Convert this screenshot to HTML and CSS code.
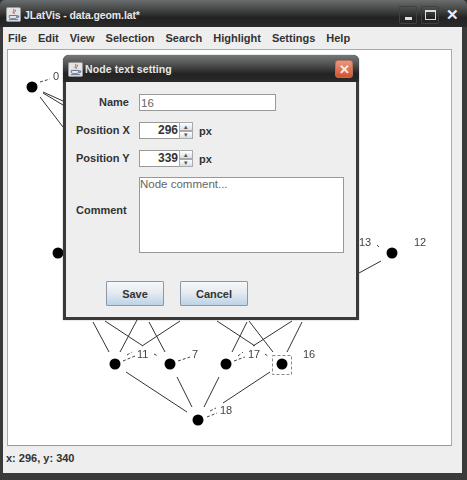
FILE: index.html
```html
<!DOCTYPE html>
<html>
<head>
	<meta name="viewport" content="width=device-width, initial-scale=1">
	<title>JLatVis - data.geom.lat*</title>
	<link rel="stylesheet" href="styles.css">
</head>
<body>
	<div class="window">
		<div class="titlebar">
			<svg class="app-icon" viewBox="0 0 16 16">
				<rect x="0.5" y="0.5" width="15" height="15" rx="1.5" fill="#e4e4e4" stroke="#9a9a9a"/>
				<path d="M8 2c2 2-2 3 0 5M10 3c1 2-2 2-1 4" fill="none" stroke="#c0504d"/>
				<path d="M3.5 9h8v2c0 2-8 2-8 0zM11.500 9.500h2v1.500h-2M3 13.500h10" fill="none" stroke="#5a6f8c"/>
			</svg>
			<span class="title-text">JLatVis - data.geom.lat*</span>
			<div class="window-buttons">
				<span class="win-btn"><span class="win-min"></span></span>
				<span class="win-btn"><span class="win-max"></span></span>
				<span class="win-btn win-x">✕</span>
			</div>
		</div>

		<div class="main">
			<div class="menubar">
				<span>File</span>
				<span>Edit</span>
				<span>View</span>
				<span>Selection</span>
				<span>Search</span>
				<span>Highlight</span>
				<span>Settings</span>
				<span>Help</span>
			</div>

			<div class="canvas">
				<svg class="graph" width="445" height="396" viewBox="7 49 445 396">
					<g class="edges">
						<path d="M43 92L63 101M43 93L63 105M40 97L63 127"/>
						<path d="M93 322L109 352M105 321L143 346M137 320L120 352M149 322L165 352M180 321L142 346"/>
						<path d="M217 321L255 346M247 322L232 352M249 321L273 352M292 321L253 346M302 322L287 352"/>
						<path d="M126 372L187 412M177 377L192 407M219 377L204 407M270 372L223 403M359 273L381 261"/>
					</g>
					<g class="dashes">
						<path d="M40 82L50 79M123 361L135 356M127 355L132 352M154 354L158 356M178 361L190 357"/>
						<path d="M234 361L245 357M238 356L243 352M265 354L269 357M207 417L217 413M210 411L216 408M377 245L379 247"/>
					</g>
					<rect class="selected" x="272.500" y="355.500" width="19" height="19"/>
					<g class="nodes">
						<circle cx="32" cy="87" r="5.500"/>
						<circle cx="58" cy="253" r="5.500"/>
						<circle cx="392" cy="253" r="5.500"/>
						<circle cx="115" cy="364" r="5.500"/>
						<circle cx="170" cy="364" r="5.500"/>
						<circle cx="226" cy="364" r="5.500"/>
						<circle cx="282" cy="364" r="5.500"/>
						<circle cx="198" cy="420" r="5.500"/>
					</g>
					<g class="labels">
						<text x="53" y="80">0</text>
						<text x="359" y="246">13</text>
						<text x="414" y="246">12</text>
						<text x="137" y="358">11</text>
						<text x="192" y="358">7</text>
						<text x="248" y="358">17</text>
						<text x="303" y="358">16</text>
						<text x="220" y="414">18</text>
					</g>
				</svg>
			</div>

			<div class="statusbar">x: 296, y: 340</div>
		</div>

		<div class="dialog">
			<div class="dialog-title">
				<svg class="app-icon" viewBox="0 0 16 16">
					<rect x="0.5" y="0.5" width="15" height="15" rx="1.5" fill="#e4e4e4" stroke="#9a9a9a"/>
					<path d="M8 2c2 2-2 3 0 5M10 3c1 2-2 2-1 4" fill="none" stroke="#c0504d"/>
					<path d="M3.500 9h8v2c0 2-8 2-8 0zM11.500 9.500h2v1.500h-2M3 13.500h10" fill="none" stroke="#5a6f8c"/>
				</svg>
				<span class="dialog-title-text">Node text setting</span>
				<span class="dialog-close">✕</span>
			</div>
			<div class="dialog-body">
				<div class="form">
					<label class="label-name">Name</label>
					<input class="field field-name" type="text" value="16">

					<label>Position X</label>
					<div class="spin-row">
						<div class="spinner">
							<span class="spin-value">296</span>
							<span class="spin-arrows"><span>▴</span><span>▾</span></span>
						</div>
						<span class="unit">px</span>
					</div>

					<label>Position Y</label>
					<div class="spin-row">
						<div class="spinner">
							<span class="spin-value">339</span>
							<span class="spin-arrows"><span>▴</span><span>▾</span></span>
						</div>
						<span class="unit">px</span>
					</div>

					<label class="label-comment">Comment</label>
					<textarea class="field field-comment">Node comment...</textarea>
				</div>
				<div class="buttons">
					<button class="button button-save">Save</button>
					<button class="button button-cancel">Cancel</button>
				</div>
			</div>
		</div>
	</div>
</body>
</html>
```

FILE: styles.css
```css
* {
	box-sizing: border-box;
}

html, body {
	margin: 0;
	padding: 0;
	background-color: #333;
}

body {
	font-family: "Liberation Sans", Arial, sans-serif;
	color: #333;
}

.window {
	position: relative;
	display: flex;
	flex-direction: column;
	width: 467px;
	height: 480px;
	overflow: hidden;
	border-radius: 5px 5px 0 0;
	background-color: #3a3a3a;
}

.titlebar {
	display: flex;
	align-items: center;
	flex: none;
	height: 27px;
	padding: 2px 6px 0 6px;
	background: linear-gradient(#6a6d6d 0, #4b4d4d 30%, #232323 65%, #2a2a2a 100%);
}

.app-icon {
	flex: none;
	width: 15px;
	height: 15px;
}

.title-text {
	margin-left: 3px;
	color: #e8e8e8;
	font-size: 10.5px;
	font-weight: bold;
	letter-spacing: -0.1px;
}

.window-buttons {
	display: flex;
	gap: 4px;
	margin-left: auto;
}

.win-btn {
	display: flex;
	align-items: center;
	justify-content: center;
	width: 18px;
	height: 18px;
	border-radius: 2px;
	box-shadow: inset 0 0 0 1px #3f4141;
	color: #eee;
	font-size: 15px;
	font-weight: bold;
}

.win-x {
	box-shadow: none;
}

.win-min {
	width: 7px;
	height: 3px;
	margin-top: 8px;
	background-color: #ddd;
}

.win-max {
	width: 11px;
	height: 10px;
	border: 1px solid #ddd;
	border-top-width: 2px;
}

.main {
	display: flex;
	flex-direction: column;
	flex: 1;
	margin: 0 5px 7px 3px;
	background-color: #eeeeee;
}

.menubar {
	display: flex;
	align-items: center;
	flex: none;
	gap: 11px;
	height: 22px;
	padding-left: 5px;
	font-size: 11px;
	font-weight: bold;
}

.canvas {
	flex: none;
	width: 445px;
	height: 397px;
	margin-left: 4px;
	border: 1px solid #aaa;
	border-bottom-color: #999;
	background-color: #fff;
}

.graph {
	display: block;
	margin: -1px 0 0 -1px;
}

.edges path {
	fill: none;
	stroke: #333;
	stroke-width: 1;
}

.dashes path {
	fill: none;
	stroke: #444;
	stroke-width: 1;
	stroke-dasharray: 3 2;
}

.selected {
	fill: none;
	stroke: #888;
	stroke-dasharray: 3 2;
}

.nodes circle {
	fill: #000;
}

.labels {
	filter: grayscale(1);
}

.labels text {
	fill: #444;
	font-size: 11px;
	font-family: "Liberation Sans", Arial, sans-serif;
}

.statusbar {
	display: flex;
	align-items: center;
	flex: 1;
	padding-left: 3px;
	padding-bottom: 3px;
	font-size: 11px;
	font-weight: bold;
}

/* dialog sits over the main window */
.dialog {
	position: absolute;
	left: 63px;
	top: 55px;
	display: flex;
	flex-direction: column;
	width: 296px;
	height: 265px;
	border-radius: 6px 6px 0 0;
	background-color: #3a3a3a;
	box-shadow: 0 0 1px #222;
}

.dialog-title {
	display: flex;
	align-items: center;
	flex: none;
	height: 27px;
	padding: 1px 6px 0 5px;
	border-radius: 6px 6px 0 0;
	background: linear-gradient(#757878 0, #555757 30%, #232323 70%, #2a2a2a 100%);
}

.dialog-title-text {
	margin-left: 2px;
	color: #e8e8e8;
	font-size: 10.5px;
	font-weight: bold;
	letter-spacing: 0.1px;
}

.dialog-close {
	display: flex;
	align-items: center;
	justify-content: center;
	width: 18px;
	height: 18px;
	margin-left: auto;
	border: 1px solid #b5705c;
	border-radius: 3px;
	background: linear-gradient(#e89880, #d2522f);
	color: #fbe9e2;
	font-size: 13px;
	font-weight: bold;
}

.dialog-body {
	display: flex;
	flex-direction: column;
	flex: 1;
	margin: 0 3px 3px 3px;
	background-color: #eeeeee;
}

.form {
	display: grid;
	grid-template-columns: 53px 205px;
	grid-template-rows: 28px 28px 27px 76px;
	column-gap: 10px;
	align-items: start;
	margin-top: 12px;
	padding-left: 10px;
}

.form label {
	font-size: 11px;
	font-weight: bold;
	line-height: 17px;
	white-space: nowrap;
}

.label-name {
	text-align: right;
}

.form .label-comment {
	margin-top: 25px;
}

.field {
	display: block;
	border: 1px solid #999;
	background-color: #fff;
	color: #666;
	font-family: "Liberation Sans", Arial, sans-serif;
	font-size: 11.5px;
	padding: 0;
	outline: none;
	resize: none;
}

.field-name {
	width: 137px;
	height: 17px;
	padding-left: 1px;
}

.field-comment {
	width: 205px;
	height: 76px;
	overflow: hidden;
}

.spin-row {
	display: flex;
	align-items: center;
}

.spinner {
	display: flex;
	width: 54px;
	height: 17px;
	border: 1px solid #999;
	background-color: #fff;
}

.spin-value {
	flex: 1;
	padding-right: 1px;
	color: #333;
	font-size: 12px;
	font-weight: bold;
	line-height: 15px;
	text-align: right;
}

.spin-arrows {
	display: flex;
	flex-direction: column;
	flex: none;
	width: 14px;
	margin: -1px -1px -1px 0;
}

.spin-arrows span {
	display: flex;
	align-items: center;
	justify-content: center;
	flex: 1;
	overflow: hidden;
	border: 1px solid #aaa;
	background: linear-gradient(#fff, #d8e0e8);
	color: #555;
	font-size: 7px;
	line-height: 1;
}

.unit {
	margin-left: 6px;
	font-size: 11px;
	font-weight: bold;
}

.buttons {
	display: flex;
	gap: 16px;
	margin-top: 28px;
	padding-left: 40px;
}

.button {
	height: 25px;
	padding: 0;
	border: 1px solid #8a99a8;
	border-radius: 1px;
	background: linear-gradient(#f6f8fa 0, #e6ebf0 45%, #bcd3e6 100%);
	color: #333;
	font-family: "Liberation Sans", Arial, sans-serif;
	font-size: 11px;
	font-weight: bold;
}

.button-save {
	width: 58px;
}

.button-cancel {
	width: 68px;
}
```
